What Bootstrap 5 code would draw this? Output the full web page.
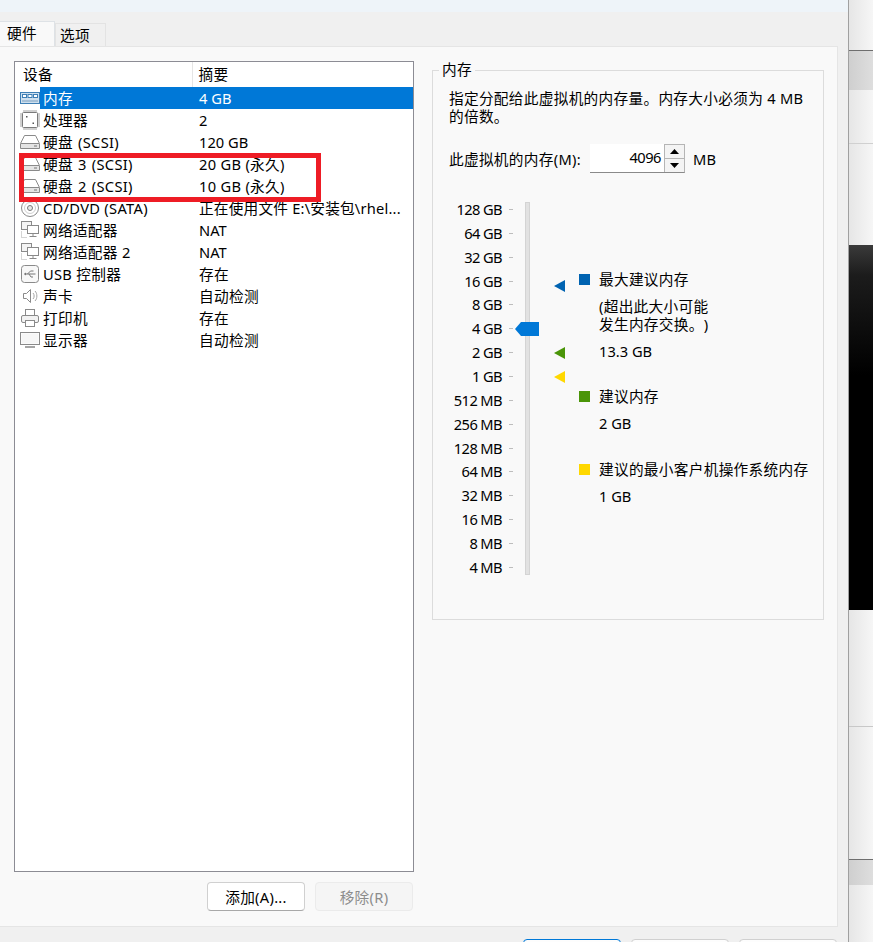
<!DOCTYPE html>
<html lang="zh-CN">
<head>
  <meta charset="UTF-8">
  <title>虚拟机设置</title>
  <link href="https://cdn.jsdelivr.net/npm/bootstrap@5.3.0/dist/css/bootstrap.min.css" rel="stylesheet">
  <style>
    html, body { height: 942px; overflow: hidden; }
    body {
      background: #f0f0f0; color: #000;
      font-family: "Noto Sans", "Noto Sans CJK SC", sans-serif;
      font-size: 14.67px; line-height: 18px; letter-spacing: .3px;
      text-spacing-trim: space-all;
    }
    .plain-latin { letter-spacing: 0; }
    .shell { width: 873px; height: 942px; position: relative; overflow: hidden; }
    .dlg { width: 849px; height: 942px; background: #f0f0f0; border-right: 1px solid #a0a0a0; flex: none; }
    .title-strip { height: 12px; background: #eef4f9; }
    .tabs-bar { height: 34px; padding-top: 9px; border: 0; align-items: flex-end; }
    .tabs-bar .nav-link {
      color: #000; border-radius: 0; padding: 0 0 0 4px; text-align: left; margin: 0;
      background: #f0f0f0; border: 1px solid #e3e3e3; border-bottom: 0; width: 51px; height: 23px; line-height: 23px;
    }
    .tabs-bar .nav-link.active { width: 55px; height: 25px; padding-left: 7px; line-height: 23px; background: #f9f9f9; border-left: 0; position: relative; z-index: 1; }
    .pane { width: 838px; height: 881px; background: #f9f9f9; border: 1px solid #e5e5e5; border-left: 0; padding: 14px 13px 0 14px; gap: 18px; }
    .left-col { width: 400px; flex: none; }
    .dev-box { height: 811px; background: #fff; border: 1px solid #8c8c94; }
    .dev-table { table-layout: fixed; width: 398px; margin: 0; border-collapse: collapse; }
    .dev-table th, .dev-table td { padding: 1px 0 0; border: 0; height: 22px; line-height: 20px; font-weight: 400; white-space: nowrap; overflow: hidden; background: transparent; box-shadow: none; color: #000; vertical-align: top; }
    .dev-table th { height: 25px; padding: 0 0 0 8px; line-height: 24px; }
    .dev-table th + th { border-left: 1px solid #e5e5e5; padding-left: 6px; }
    .dev-table td.ico { padding: 0 0 0 5px; line-height: 0; vertical-align: middle; }
    .dev-table td.dname { padding-left: 3px; }
    .dev-table td.dname.disk-name { word-spacing: 1px; }
    .dev-table td.dval { padding-left: 7px; }
    .dev-table td.dval.tight-val { letter-spacing: .2px; }
    .dev-table tr.picked td.dname, .dev-table tr.picked td.dval { background: #0078d7; color: #fff; }
    .dev-table svg { display: block; }
    .act-btn { width: 98px; height: 29px; padding: 0; font-size: 14.67px; line-height: 26px; letter-spacing: .3px; background: #fff; border: 1px solid #d0d0d0; border-bottom-color: #a8a8a8; border-radius: 4px; color: #000; }
    .act-btn:disabled { background: #f5f5f5; border-color: #ebebeb; color: #8c8c8c; opacity: 1; }
    .btn-row { margin-top: 10px; margin-right: 1px; gap: 10px; }
    .group-box { width: 392px; height: 550px; margin-top: 9px; border: 1px solid #dcdcdc; padding: 0 16px; position: relative; }
    .group-title { position: absolute; left: 6px; top: -11px; background: #f9f9f9; padding: 0 3px; }
    .group-text { margin: 18px 0 0; }
    .mem-row { margin-top: 19px; height: 29px; }
    .mem-input { width: 95px; height: 29px; margin-left: 9px; background: #fff; border-bottom: 1px solid #8a8a8a; border-right: 1px solid #b5b5b5; padding-right: 3px; }
    .mem-val { flex: 1; text-align: right; padding-right: 3px; line-height: 26px; letter-spacing: -.5px; }
    .spin { width: 20px; height: 28px; border: 1px solid #b5b5b5; border-right: 0; border-bottom: 0; background: #f0f0f0; margin-right: -3px; }
    .spin-part { height: 13.5px; border-bottom: 1px solid #b5b5b5; background: #f4f4f4; }
    .spin-part:last-child { border-bottom: 0; }
    .mem-unit { margin-left: 8px; }
    .scale-wrap { margin-top: 25px; position: relative; height: 380px; }
    .scale-col { width: 83px; margin-left: -30px; flex: none; }
    .scale-item { height: 23.87px; line-height: 23.87px; width: 83px; text-align: right; white-space: nowrap; position: relative; letter-spacing: -.6px; }
    .tick-mark { position: absolute; left: 90px; top: 11px; width: 4px; height: 1px; background: #bdbdbd; }
    .slide-track { position: absolute; left: 76px; top: 4px; width: 5px; height: 373px; background: #e2e2e2; border: 1px solid #d4d4d4; }
    .thumb { position: absolute; left: 66px; top: 124px; }
    .pin { position: absolute; left: 105px; }
    .legend-col { position: absolute; left: 130px; top: 0; width: 240px; }
    .legend-row { gap: 9px; align-items: center; white-space: nowrap; }
    .swatch { width: 11px; height: 11px; flex: none; display: block; }
    .legend-note { padding-left: 20px; white-space: nowrap; }
    .side-strip { flex: 1; }
    .side-strip div { background: linear-gradient(90deg, #e6e6e6, #f6f6f6); }
    .side-strip .seg-grey { background: linear-gradient(90deg, #cfcfcf, #dedede); }
    .side-strip .seg-dark { background: linear-gradient(#3a3a3a 0, #1c1c1c 30px, #000 130px, #000 100%); }
    .foot-btns { gap: 10px; margin: 12px 0 0 523px; }
    .foot-btn { width: 98px; height: 26px; flex: none; padding: 0; background: #fdfdfd; border: 1px solid #d0d0d0; border-radius: 4px; }
    .foot-btn.is-default { border: 1px solid #0078d7; }
    .red-mark { position: absolute; left: 19px; top: 153px; width: 302px; height: 49px; border: 5px solid #ee1c25; }
  </style>
</head>
<body>
<svg width="0" height="0" class="d-block position-absolute">
  <defs>
    <symbol id="i-ram" viewBox="0 0 20 16"><rect x=".5" y="2.5" width="19" height="11" fill="#cfe0ef" stroke="#3f7fb5"/><rect x="2.5" y="4.5" width="4" height="3" fill="#fff" stroke="#3f7fb5"/><rect x="8" y="4.5" width="4" height="3" fill="#fff" stroke="#3f7fb5"/><rect x="13.5" y="4.5" width="4" height="3" fill="#fff" stroke="#3f7fb5"/><path d="M2 11h16" stroke="#7a9fbe"/></symbol>
    <symbol id="i-cpu" viewBox="0 0 20 20"><rect x="2.500" y="2.500" width="15" height="15" rx="1" fill="#fff" stroke="#7a7a7a"/><path d="M4 0v2M6 0v2M8 0v2M10 0v2M12 0v2M14 0v2M16 0v2M4 18v2M6 18v2M8 18v2M10 18v2M12 18v2M14 18v2M16 18v2M0 4h2M0 6h2M0 8h2M0 10h2M0 12h2M0 14h2M0 16h2M18 4h2M18 6h2M18 8h2M18 10h2M18 12h2M18 14h2M18 16h2" stroke="#a0a0a0"/><rect x="6" y="6" width="1.500" height="1.500" fill="#555"/><rect x="12.500" y="12.500" width="1.500" height="1.500" fill="#555"/></symbol>
    <symbol id="i-disk" viewBox="0 0 20 16"><path d="M4.500 1.500h11l4 8v5H.5v-5z" fill="#fff" stroke="#8a8a8a"/><path d="M1 9.500h18" stroke="#8a8a8a"/><rect x="1" y="10" width="18" height="4" fill="#e4e4e4"/><rect x="14" y="11.500" width="3" height="1" fill="#777"/></symbol>
    <symbol id="i-cd" viewBox="0 0 20 20"><circle cx="10" cy="10" r="8.500" fill="#fff" stroke="#8a8a8a"/><circle cx="10" cy="10" r="5.500" fill="none" stroke="#cfcfcf"/><circle cx="10" cy="10" r="2.500" fill="#e8e8e8" stroke="#777"/></symbol>
    <symbol id="i-net" viewBox="0 0 20 20"><rect x="1.500" y="1.500" width="10" height="8" fill="#f4f4f4" stroke="#8a8a8a"/><rect x="7.500" y="5.500" width="11" height="8" fill="#fff" stroke="#8a8a8a"/><path d="M13 13.500v3M9.500 16.500h7" fill="none" stroke="#8a8a8a"/><path d="M1.500 11.500v6h6" fill="none" stroke="#aaa" stroke-dasharray="1 1"/></symbol>
    <symbol id="i-usb" viewBox="0 0 20 20"><rect x="1.500" y="1.500" width="17" height="17" rx="3" fill="#f8f8f8" stroke="#8a8a8a"/><path d="M4.500 10h11M7.500 10l3-3h3M9 10l2 3h2" fill="none" stroke="#777"/><path d="M4 10l2-1.500v3z" fill="#777"/></symbol>
    <symbol id="i-snd" viewBox="0 0 20 20"><path d="M3.500 7.500h3l4-4v13l-4-4h-3z" fill="#fff" stroke="#8a8a8a"/><path d="M13 7c1.500 1.500 1.500 4.500 0 6M15 5c2.500 2.500 2.500 7.500 0 10" fill="none" stroke="#a5a5a5"/></symbol>
    <symbol id="i-prt" viewBox="0 0 20 20"><rect x="5.500" y="1.500" width="9" height="6" fill="#fff" stroke="#8a8a8a"/><rect x="1.500" y="7.500" width="17" height="7" rx="1.500" fill="#f2f2f2" stroke="#8a8a8a"/><rect x="5.500" y="12.500" width="9" height="6" fill="#fff" stroke="#8a8a8a"/></symbol>
    <symbol id="i-mon" viewBox="0 0 20 18"><rect x=".5" y="1.500" width="19" height="12" fill="#fff" stroke="#8a8a8a"/><rect x="1.500" y="2.500" width="17" height="10" fill="#f6f6f6"/><rect x="5" y="15" width="10" height="2" fill="#a5a5a5"/></symbol>
  </defs>
</svg>

<div class="shell d-flex">
  <div class="dlg">
    <div class="title-strip"></div>
    <ul class="nav nav-tabs tabs-bar">
      <li class="nav-item"><a class="nav-link active" href="#">硬件</a></li>
      <li class="nav-item"><a class="nav-link" href="#">选项</a></li>
    </ul>
    <div class="pane d-flex">
      <div class="left-col">
        <div class="dev-box">
          <table class="table dev-table">
            <colgroup><col style="width:25px"><col style="width:152px"><col></colgroup>
            <thead><tr><th colspan="2">设备</th><th>摘要</th></tr></thead>
            <tbody>
              <tr class="picked"><td class="ico"><svg width="20" height="16"><use href="#i-ram"/></svg></td><td class="dname">内存</td><td class="dval plain-latin">4 GB</td></tr>
              <tr><td class="ico"><svg width="20" height="20"><use href="#i-cpu"/></svg></td><td class="dname">处理器</td><td class="dval plain-latin">2</td></tr>
              <tr><td class="ico"><svg width="20" height="16"><use href="#i-disk"/></svg></td><td class="dname disk-name">硬盘 (SCSI)</td><td class="dval plain-latin">120 GB</td></tr>
              <tr><td class="ico"><svg width="20" height="16"><use href="#i-disk"/></svg></td><td class="dname disk-name">硬盘 3 (SCSI)</td><td class="dval">20 GB (永久)</td></tr>
              <tr><td class="ico"><svg width="20" height="16"><use href="#i-disk"/></svg></td><td class="dname disk-name">硬盘 2 (SCSI)</td><td class="dval">10 GB (永久)</td></tr>
              <tr><td class="ico"><svg width="20" height="20"><use href="#i-cd"/></svg></td><td class="dname">CD/DVD (SATA)</td><td class="dval tight-val">正在使用文件 E:\安装包\rhel...</td></tr>
              <tr><td class="ico"><svg width="20" height="20"><use href="#i-net"/></svg></td><td class="dname">网络适配器</td><td class="dval plain-latin">NAT</td></tr>
              <tr><td class="ico"><svg width="20" height="20"><use href="#i-net"/></svg></td><td class="dname">网络适配器 2</td><td class="dval plain-latin">NAT</td></tr>
              <tr><td class="ico"><svg width="20" height="20"><use href="#i-usb"/></svg></td><td class="dname">USB 控制器</td><td class="dval">存在</td></tr>
              <tr><td class="ico"><svg width="20" height="20"><use href="#i-snd"/></svg></td><td class="dname">声卡</td><td class="dval">自动检测</td></tr>
              <tr><td class="ico"><svg width="20" height="20"><use href="#i-prt"/></svg></td><td class="dname">打印机</td><td class="dval">存在</td></tr>
              <tr><td class="ico"><svg width="20" height="18"><use href="#i-mon"/></svg></td><td class="dname">显示器</td><td class="dval">自动检测</td></tr>
            </tbody>
          </table>
        </div>
        <div class="d-flex justify-content-end btn-row">
          <button class="btn act-btn" type="button">添加(A)...</button>
          <button class="btn act-btn" type="button" disabled>移除(R)</button>
        </div>
      </div>

      <div class="group-box">
        <span class="group-title">内存</span>
        <p class="group-text">指定分配给此虚拟机的内存量。内存大小必须为 4 MB<br>的倍数。</p>
        <div class="d-flex align-items-center mem-row">
          <span>此虚拟机的内存(M):</span>
          <div class="d-flex mem-input">
            <span class="mem-val">4096</span>
            <div class="spin">
              <div class="spin-part d-flex align-items-center justify-content-center"><svg width="9" height="5"><path d="M4.500 0L9 5H0z" fill="#000"/></svg></div>
              <div class="spin-part d-flex align-items-center justify-content-center"><svg width="9" height="5"><path d="M0 0h9L4.500 5z" fill="#000"/></svg></div>
            </div>
          </div>
          <span class="mem-unit">MB</span>
        </div>
        <div class="scale-wrap d-flex">
          <div class="scale-col" id="scale"></div>
          <div class="slide-track"></div>
          <svg class="thumb" width="24" height="14"><path d="M0 7L6 0h18v14H6z" fill="#0078d7"/></svg>
          <svg class="pin" style="top:82px" width="12" height="12"><path d="M0 6L11 0v12z" fill="#0063b1"/></svg>
          <svg class="pin" style="top:149px" width="12" height="12"><path d="M0 6L11 0v12z" fill="#4a9508"/></svg>
          <svg class="pin" style="top:173px" width="12" height="12"><path d="M0 6L11 0v12z" fill="#ffd800"/></svg>
          <div class="legend-col">
            <div class="d-flex legend-row" style="margin-top:72px"><span class="swatch" style="background:#0063b1"></span><span>最大建议内存</span></div>
            <div class="legend-note" style="margin-top:9px">(超出此大小可能<br>发生内存交换。)</div>
            <div class="legend-note plain-latin" style="margin-top:9px">13.3 GB</div>
            <div class="d-flex legend-row" style="margin-top:27px"><span class="swatch" style="background:#4a9508"></span><span>建议内存</span></div>
            <div class="legend-note plain-latin" style="margin-top:9px">2 GB</div>
            <div class="d-flex legend-row" style="margin-top:28px"><span class="swatch" style="background:#ffd800"></span><span>建议的最小客户机操作系统内存</span></div>
            <div class="legend-note plain-latin" style="margin-top:9px">1 GB</div>
          </div>
        </div>
      </div>
    </div>
    <div class="d-flex foot-btns">
      <button class="btn foot-btn is-default" type="button"></button>
      <button class="btn foot-btn" type="button"></button>
      <button class="btn foot-btn" type="button"></button>
    </div>
  </div>
  <div class="side-strip d-flex flex-column">
    <div style="height:50px"></div>
    <div class="seg-grey" style="height:40px;border-top:1px solid #6e6e6e"></div>
    <div style="height:53px"></div>
    <div style="height:102px;border-top:1px solid #d0d0d0"></div>
    <div class="seg-dark" style="height:365px"></div>
    <div style="height:116px"></div>
    <div style="height:133px;border-top:1px solid #c8c8c8"></div>
    <div class="seg-grey" style="height:26px;border-top:1px solid #6e6e6e"></div>
    <div style="height:57px"></div>
  </div>
  <div class="red-mark"></div>
</div>

<script>
  const scaleLabels = ['128 GB', '64 GB', '32 GB', '16 GB', '8 GB', '4 GB', '2 GB', '1 GB', '512 MB', '256 MB', '128 MB', '64 MB', '32 MB', '16 MB', '8 MB', '4 MB'];
  const scaleCol = document.getElementById('scale');
  scaleLabels.forEach(label => {
    const row = document.createElement('div');
    row.className = 'scale-item';
    row.textContent = label;
    const tick = document.createElement('span');
    tick.className = 'tick-mark';
    row.appendChild(tick);
    scaleCol.appendChild(row);
  });
</script>
<script src="https://cdn.jsdelivr.net/npm/bootstrap@5.3.0/dist/js/bootstrap.bundle.min.js"></script>
</body>
</html>
